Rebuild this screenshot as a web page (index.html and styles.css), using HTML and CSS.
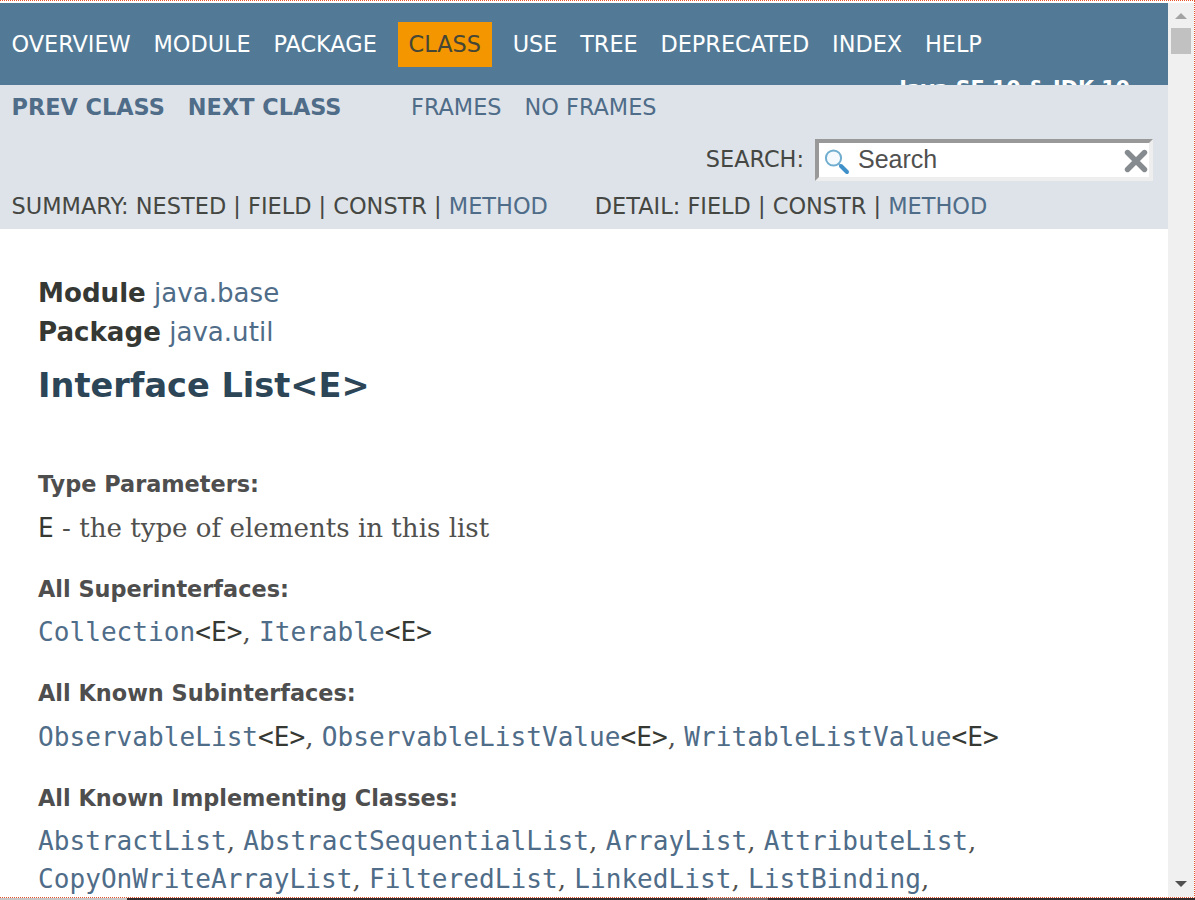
FILE: index.html
```html
<!DOCTYPE html>
<html lang="en">
<head>
<meta charset="utf-8">
<title>List (Java SE 10 &amp; JDK 10)</title>
<link rel="stylesheet" href="styles.css">
</head>
<body>
<div class="frame">
  <div class="page">
    <header>
      <nav class="top-nav">
        <ul class="nav-list">
          <li>OVERVIEW</li><li>MODULE</li><li>PACKAGE</li><li class="current">CLASS</li><li>USE</li><li>TREE</li><li>DEPRECATED</li><li>INDEX</li><li>HELP</li>
        </ul>
        <div class="about">Java SE 10 &amp; JDK 10</div>
      </nav>
      <div class="sub-nav">
        <div class="row row-links"><a class="strong">PREV CLASS</a><a class="strong">NEXT CLASS</a><a class="frames">FRAMES</a><a>NO FRAMES</a></div>
        <div class="row row-search">
          <span>SEARCH:</span>
          <div class="search-box">
            <svg class="glass" viewBox="0 0 26 26"><path d="M14.500 14.500l3 3" stroke="#8fb4cc" stroke-width="2"/><path d="M17 17l6 6" stroke="#3f90c8" stroke-width="4" stroke-linecap="round"/><circle cx="9.500" cy="9" r="7.600" fill="#f4fafd" stroke="#70adcf" stroke-width="2"/></svg>
            <span class="search-text">Search</span>
            <svg class="clear" viewBox="0 0 24 24"><path d="M3.500 3.500l17 17M20.500 3.500l-17 17" stroke="#858b8f" stroke-width="5.400" stroke-linecap="round"/></svg>
          </div>
        </div>
        <div class="row row-summary"><span>SUMMARY: NESTED | FIELD | CONSTR | <a>METHOD</a></span><span>DETAIL: FIELD | CONSTR | <a>METHOD</a></span></div>
      </div>
    </header>
    <main>
      <div class="sub-title"><b>Module</b> <a>java.base</a></div>
      <div class="sub-title"><b>Package</b> <a>java.util</a></div>
      <h2>Interface List&lt;E&gt;</h2>
      <dl>
        <dt>Type Parameters:</dt>
        <dd><code>E</code> - the type of elements in this list</dd>
        <dt>All Superinterfaces:</dt>
        <dd><code><a>Collection</a>&lt;E&gt;</code>, <code><a>Iterable</a>&lt;E&gt;</code></dd>
        <dt>All Known Subinterfaces:</dt>
        <dd><code><a>ObservableList</a>&lt;E&gt;</code>, <code><a>ObservableListValue</a>&lt;E&gt;</code>, <code><a>WritableListValue</a>&lt;E&gt;</code></dd>
        <dt>All Known Implementing Classes:</dt>
        <dd><code><a>AbstractList</a></code>, <code><a>AbstractSequentialList</a></code>, <code><a>ArrayList</a></code>, <code><a>AttributeList</a></code>,<br><code><a>CopyOnWriteArrayList</a></code>, <code><a>FilteredList</a></code>, <code><a>LinkedList</a></code>, <code><a>ListBinding</a></code>,</dd>
      </dl>
    </main>
  </div>
  <div class="scrollbar">
    <svg class="arrow" viewBox="0 0 12 6"><path d="M0 6L6 0l6 6z" fill="#a3a3a3"/></svg>
    <div class="thumb"></div>
    <svg class="arrow arrow-down" viewBox="0 0 12 6"><path d="M0 0h12L6 6z" fill="#505050"/></svg>
  </div>
</div>
<div class="bottom-edge"><i class="edge-light"></i><i class="edge-dark"></i><i class="edge-grey"></i><i class="edge-rest"></i></div>
</body>
</html>
```
FILE: styles.css
```css
* { box-sizing: border-box; }
body { margin: 0; width: 1195px; height: 900px; overflow: hidden; background: #fff; color: #353833; font-family: "DejaVu Sans", sans-serif; font-size: 22.4px; display: flex; flex-direction: column; }
a { color: #4f6c88; }
.frame { height: 898px; display: flex; border: 1px dotted #e8532c; border-left: 0; padding-top: 2px; flex: none; }
.page { width: 1168px; height: 895px; overflow: hidden; flex: none; }
.top-nav { height: 82px; background: #527a96; overflow: hidden; color: #fff; display: flex; flex-direction: column; }
.nav-list { list-style: none; margin: 0; padding: 19px 0 0 11.5px; display: flex; gap: 22.75px; height: 72px; flex: none; }
.nav-list li { height: 45px; line-height: 45px; }
.nav-list .current { background: #f39600; color: #454636; padding: 0 11px; margin: 0 -2px; }
.about { align-self: flex-end; margin-right: 38px; font-size: 20.7px; font-weight: bold; line-height: 28px; height: 28px; flex: none; }
.sub-nav { height: 144px; background: #dee3e9; color: #454743; }
.row { display: flex; white-space: pre; padding-left: 11.5px; }
.row-links { height: 44px; line-height: 44px; gap: 23px; }
.strong { font-weight: bold; }
.frames { margin-left: 46.5px; }
.row-search { height: 60px; justify-content: flex-end; padding: 10px 15px 0 0; gap: 11px; line-height: 41px; }
.search-box { width: 338px; height: 42px; border: 4px solid; border-color: #999 #eee #eee #999; background: #fff; display: flex; align-items: flex-start; padding: 0 1px 0 5px; }
.glass { width: 26px; height: 26px; margin-top: 6px; }
.search-text { font-family: "Liberation Sans", sans-serif; font-size: 25px; line-height: 33px; margin-left: 8px; flex: 1; color: #505050; }
.clear { width: 24px; height: 24px; margin-top: 6px; }
.row-summary { font-size: 22.45px; line-height: 34px; gap: 47px; }
main { padding: 45px 0 0 38px; }
.sub-title { font-size: 26.1px; height: 39px; line-height: 39px; }
h2 { margin: 14px 0 0; font-size: 33.6px; line-height: 40px; color: #2c4557; }
dl { margin: 63px 0 0; }
dt { font-size: 22.4px; font-weight: bold; color: #4e4e4e; line-height: 30px; }
dd { margin: 10.5px 0 26.5px; font-family: "DejaVu Serif", serif; font-size: 26.1px; line-height: 37.500px; white-space: nowrap; color: #50504e; }
code { font-family: "DejaVu Sans Mono", monospace; font-size: 26.12px; color: #353833; }
.scrollbar { flex: 1; background: #f0f0f0; display: flex; flex-direction: column; align-items: center; padding-top: 10px; }
.arrow { width: 12px; height: 6px; }
.thumb { width: 20px; height: 26px; background: #c1c1c1; margin-top: 9px; }
.arrow-down { margin-top: auto; margin-bottom: 10px; }
.bottom-edge { height: 2px; display: flex; }
.edge-light { width: 127px; background: #c6c6c6; }
.edge-dark { width: 580px; background: #302b2d; }
.edge-grey { width: 61px; background: #696566; }
.edge-rest { flex: 1; background: #302b2d; }
```
